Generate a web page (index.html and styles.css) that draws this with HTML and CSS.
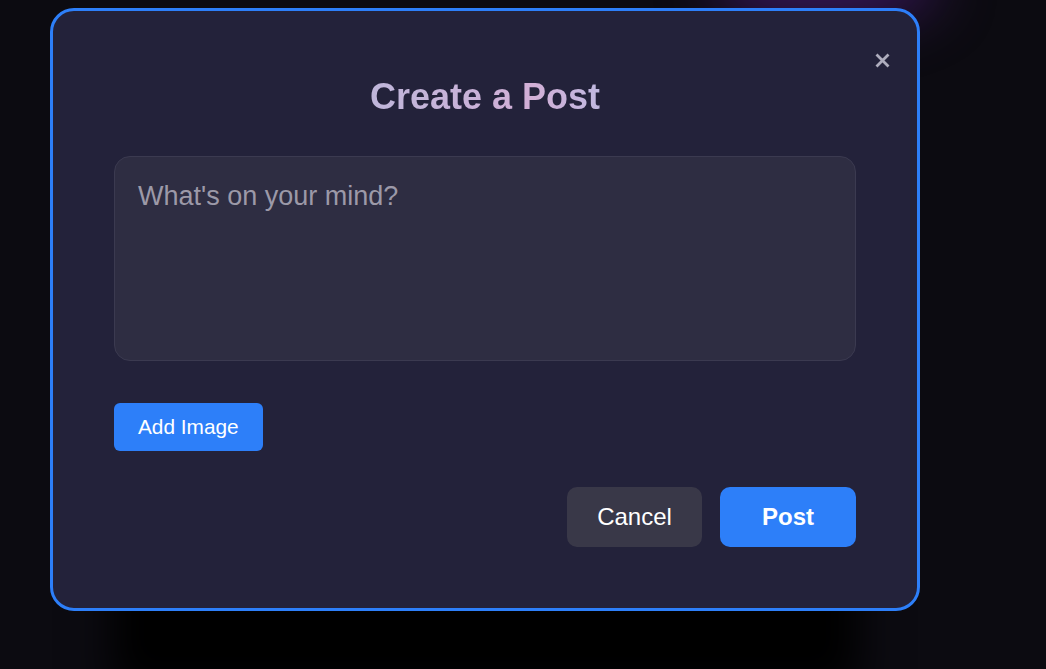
FILE: index.html
```html
<!DOCTYPE html>
<html lang="en">
<head>
<meta charset="utf-8">
<title>Create a Post</title>
<link rel="stylesheet" href="styles.css">
</head>
<body>
<div class="stage">
  <div class="glow"></div>
  <div class="modal">
    <button class="close" aria-label="Close">
      <svg width="17" height="17" viewBox="0 0 17 17"><path d="M2.5 2.5 L14.5 14.5 M14.5 2.5 L2.5 14.5" stroke="#aeadbd" stroke-width="2.8" stroke-linecap="butt"/></svg>
    </button>
    <h2 class="title">Create a Post</h2>
    <textarea class="input" placeholder="What's on your mind?"></textarea>
    <button class="btn-add">Add Image</button>
    <div class="actions">
      <button class="btn btn-cancel">Cancel</button>
      <button class="btn btn-post">Post</button>
    </div>
  </div>
</div>
</body>
</html>
```
FILE: styles.css
```css
html, body {
  margin: 0;
  height: 100%;
  background: #0c0b11;
  overflow: hidden;
  font-family: "Liberation Sans", Arial, sans-serif;
}

.stage {
  position: relative;
  padding: 8px 0 0 50px;
}

.glow {
  position: absolute;
  left: 710px;
  top: -55px;
  width: 230px;
  height: 80px;
  border-radius: 50%;
  background: rgba(80, 30, 130, 0.6);
  filter: blur(28px);
}

.modal {
  position: relative;
  box-sizing: border-box;
  width: 870px;
  height: 603px;
  border: 3px solid #2d7ff9;
  border-radius: 24px;
  background: #23223a;
  padding: 65px 61px 60px 61px;
  display: flex;
  flex-direction: column;
  box-shadow: 0 140px 40px -62px #000;
}

.close {
  position: absolute;
  top: 37px;
  right: 23px;
  width: 24px;
  height: 24px;
  padding: 0;
  border: 0;
  background: transparent;
  display: flex;
  align-items: center;
  justify-content: center;
  cursor: pointer;
}

.title {
  margin: 0;
  font-size: 36px;
  line-height: 41px;
  font-weight: 700;
  text-align: center;
  background: linear-gradient(90deg, #bfb6da 0%, #c9b2d8 45%, #d2afd6 70%, #c0b8e0 100%);
  -webkit-background-clip: text;
  background-clip: text;
  color: transparent;
  align-self: center;
}

.input {
  display: block;
  box-sizing: border-box;
  width: 100%;
  height: 205px;
  margin-top: 39px;
  padding: 24px 23px 20px;
  border: 1px solid #3b3a50;
  border-radius: 16px;
  background: #2e2d42;
  color: #e6e4ef;
  font-family: "Liberation Sans", Arial, sans-serif;
  font-size: 27px;
  line-height: 31px;
  resize: none;
  outline: none;
}

.input::placeholder {
  color: #9c99a8;
}

.btn-add {
  align-self: flex-start;
  margin-top: 42px;
  height: 48px;
  padding: 0 24px;
  border: 0;
  border-radius: 6px;
  background: #2d7ff9;
  color: #fff;
  font-family: "Liberation Sans", Arial, sans-serif;
  font-size: 20.8px;
}

.actions {
  display: flex;
  justify-content: flex-end;
  gap: 18px;
  margin-top: 36px;
}

.btn {
  width: 136px;
  height: 60px;
  border: 0;
  border-radius: 10px;
  color: #fff;
  font-family: "Liberation Sans", Arial, sans-serif;
  font-size: 24px;
}

.btn-cancel {
  width: 135px;
  background: #393848;
}

.btn-post {
  background: #2d7ff9;
  font-weight: 700;
}
```
